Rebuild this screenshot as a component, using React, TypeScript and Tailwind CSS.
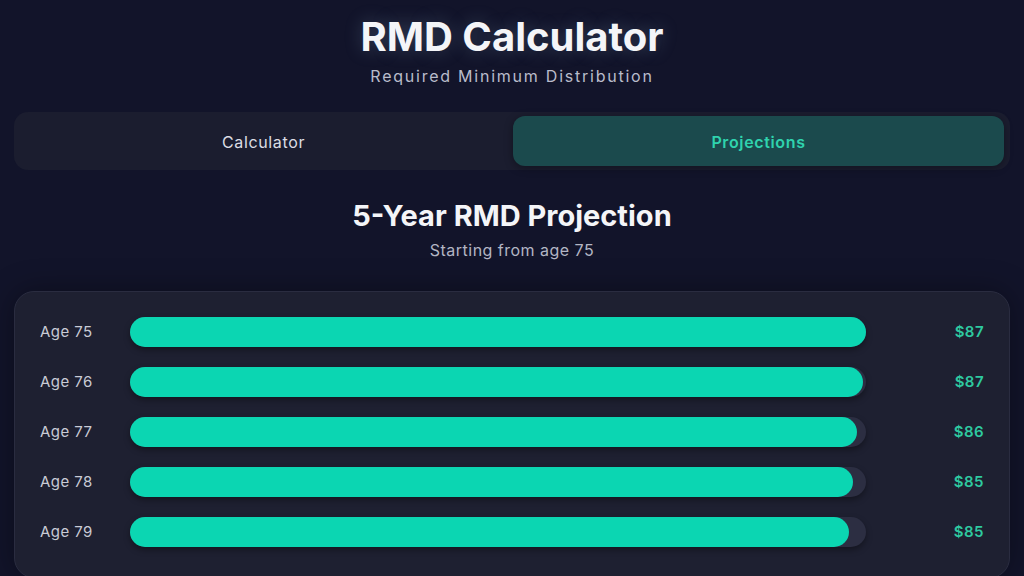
import React from "react";

const rows = [
  { age: 75, value: "$87", pct: 100 },
  { age: 76, value: "$87", pct: 99.6 },
  { age: 77, value: "$86", pct: 98.8 },
  { age: 78, value: "$85", pct: 98.2 },
  { age: 79, value: "$85", pct: 97.7 },
];

export default function App() {
  return (
    <div
      className="w-[1024px] h-[576px] overflow-hidden bg-[#12142a] text-white px-[14px] pt-[15px]"
      style={{ fontFamily: "Inter, 'Noto Sans', sans-serif" }}
    >
      <div className="flex flex-col items-center">
        <h1 className="text-[40px] leading-[44px] font-bold text-[#f4f5f8] [text-shadow:0_0_18px_rgba(160,200,230,0.25)]">
          RMD Calculator
        </h1>
        <p className="mt-[7px] text-[16px] leading-[20px] tracking-[0.11em] text-[#b9bccb]">
          Required Minimum Distribution
        </p>
      </div>

      {/* tabs */}
      <div className="mt-[26px] flex gap-[4px] rounded-[14px] bg-[#1b1d2f] py-[4px] pl-[4px] pr-[6px] h-[58px]">
        <button className="flex-1 rounded-[12px] pt-[2px] text-[16px] tracking-[0.04em] text-[#dcdde4]">
          Calculator
        </button>
        <button className="flex-1 rounded-[12px] pt-[2px] bg-[#1b4a4d] text-[16px] font-semibold tracking-[0.04em] text-[#2fd3ae] shadow-[0_2px_8px_rgba(0,0,0,0.35)]">
          Projections
        </button>
      </div>

      <div className="mt-[28px] flex flex-col items-center">
        <h2 className="text-[29px] leading-[36px] font-bold text-[#f4f5f8]">5-Year RMD Projection</h2>
        <p className="mt-[6px] text-[16px] leading-[20px] tracking-[0.03em] text-[#b3b6c4]">Starting from age 75</p>
      </div>

      <div className="mt-[31px] rounded-[20px] border border-[#2a2c40] bg-[#1e2031] px-[25px] pt-[25px] pb-[30px] shadow-[0_0_30px_rgba(0,0,0,0.35)]">
        <div className="flex flex-col gap-[20px]">
          {rows.map((r) => (
            <div key={r.age} className="flex items-center h-[30px]">
              <span className="w-[90px] text-[15px] tracking-[0.03em] text-[#c9cbd6]">Age {r.age}</span>
              <div className="w-[736px] h-[30px] rounded-full bg-[#2c2e42] shadow-[0_3px_6px_rgba(0,0,0,0.35)]">
                <div
                  className="h-full rounded-full bg-[#0bd6b2]"
                  style={{ width: `${r.pct}%` }}
                />
              </div>
              <span className="flex-1 text-right text-[15px] font-semibold tracking-[0.03em] text-[#2ec9a0]">
                {r.value}
              </span>
            </div>
          ))}
        </div>
      </div>
    </div>
  );
}
